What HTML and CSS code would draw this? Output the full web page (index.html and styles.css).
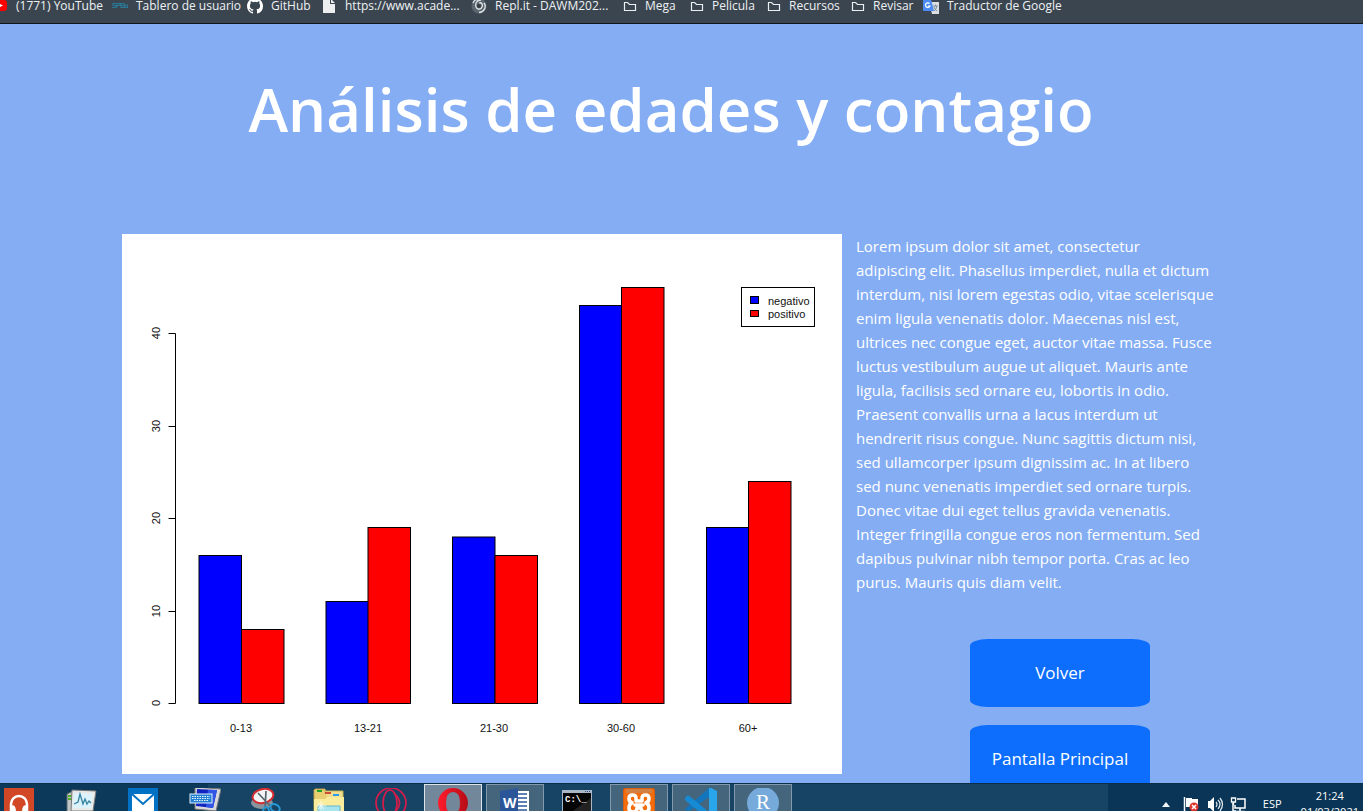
FILE: index.html
```html
<!DOCTYPE html>
<html lang="es">
<head>
<meta charset="utf-8">
<title>Análisis de edades y contagio</title>
<link rel="stylesheet" href="styles.css">
</head>
<body>
<nav class="bookmarks" aria-label="Marcadores">
  <a class="bookmark" href="#"><svg class="bm-icon" viewBox="0 0 16 16"><rect y="2" width="15" height="11" rx="3" fill="#f00"/><path d="M6 5l5 2.500-5 2.500z" fill="#fff"/></svg><span>(1771) YouTube</span></a>
  <a class="bookmark" href="#"><svg class="bm-icon" viewBox="0 0 16 16"><path d="M4 5.500H1v2h3v2H0M5 9.500v-4h3v2H5m4 2v-4h3v4zm4 0v-2.500h2.500v2.500zM5 7.500h6" fill="none" stroke="#2b7692" stroke-width="1.200"/></svg><span>Tablero de usuario</span></a>
  <a class="bookmark" href="#"><svg class="bm-icon" viewBox="0 0 16 16"><path fill="#fff" d="M8 0C3.580 0 0 3.580 0 8c0 3.540 2.290 6.530 5.470 7.590.4.070.55-.17.55-.38 0-.19-.01-.82-.01-1.490-2.010.37-2.530-.49-2.690-.94-.09-.23-.48-.94-.82-1.130-.28-.15-.68-.52-.01-.53.63-.01 1.080.58 1.230.82.72 1.210 1.870.87 2.330.66.07-.52.28-.87.51-1.070-1.780-.2-3.640-.89-3.640-3.950 0-.87.31-1.590.82-2.150-.08-.2-.36-1.020.08-2.120 0 0 .67-.21 2.200.82a7.600 7.600 0 0 1 4 0c1.530-1.040 2.200-.82 2.200-.82.44 1.100.16 1.920.08 2.120.51.56.82 1.270.82 2.150 0 3.070-1.870 3.750-3.650 3.950.29.25.54.73.54 1.480 0 1.070-.01 1.930-.01 2.200 0 .21.15.46.55.38A8 8 0 0 0 16 8c0-4.420-3.580-8-8-8z"/></svg><span>GitHub</span></a>
  <a class="bookmark" href="#"><svg class="bm-icon" viewBox="0 0 16 16"><path d="M2 0h7v6h5v9H2zM10 1l4 4h-4z" fill="#eceeef"/></svg><span>https://www.acade...</span></a>
  <a class="bookmark" href="#"><svg class="bm-icon" viewBox="0 0 16 16" fill="none"><circle cx="8" cy="8" r="7.500" fill="#5b6770"/><path d="M8 5c3-1 4 2 3 4-1 3-5 3-6 0-1-4 1-7 5-7M13 5c3 4 0 9-5 9.500M2 5c1-3 4-4 7-3.500" stroke="#dfe3e6" stroke-width="1.300"/><circle cx="8" cy="8" r="2" fill="#343b42"/></svg><span>Repl.it - DAWM202...</span></a>
  <a class="bookmark folder" href="#"><svg class="bm-icon" viewBox="0 0 16 16"><path d="M2.500 4.500h3l2 2h6v6h-11z" class="folder-line"/></svg><span>Mega</span></a>
  <a class="bookmark folder" href="#"><svg class="bm-icon" viewBox="0 0 16 16"><path d="M2.500 4.500h3l2 2h6v6h-11z" class="folder-line"/></svg><span>Pelicula</span></a>
  <a class="bookmark folder" href="#"><svg class="bm-icon" viewBox="0 0 16 16"><path d="M2.500 4.500h3l2 2h6v6h-11z" class="folder-line"/></svg><span>Recursos</span></a>
  <a class="bookmark folder" href="#"><svg class="bm-icon" viewBox="0 0 16 16"><path d="M2.500 4.500h3l2 2h6v6h-11z" class="folder-line"/></svg><span>Revisar</span></a>
  <a class="bookmark" href="#"><svg class="bm-icon" viewBox="0 0 16 16"><path d="M6 4h10v12H9z" fill="#dcdfe1"/><path d="M0 1h8l3 12H1q-1 0-1-1z" fill="#4c8bf5"/><path d="M6.500 5.500A2.300 2.300 0 1 0 7 8H5" fill="none" stroke="#fff" stroke-width="1.200"/><path d="M10 8h5M12.500 6.500V8m1.500 0q-1 4-3 5m0-4q1 3 3 4" fill="none" stroke="#78909c"/></svg><span>Traductor de Google</span></a>
</nav>

<main class="page">
  <h1 class="title">Análisis de edades y contagio</h1>
  <div class="content">
    <svg class="chart" viewBox="0 0 720 540" role="img" aria-label="Casos negativos y positivos por edad">
      <rect width="720" height="540" fill="#fff"/>
      <path class="axis" d="M46.500 99.500h7v370h-7M46.500 192.500h7M46.500 284.500h7M46.500 377.500h7"/>
      <g class="chart-text" text-anchor="middle">
        <text transform="translate(38 469) rotate(-90)">0</text>
        <text transform="translate(38 377) rotate(-90)">10</text>
        <text transform="translate(38 284) rotate(-90)">20</text>
        <text transform="translate(38 192) rotate(-90)">30</text>
        <text transform="translate(38 99) rotate(-90)">40</text>
        <text x="119" y="498">0-13</text>
        <text x="246" y="498">13-21</text>
        <text x="372" y="498">21-30</text>
        <text x="499" y="498">30-60</text>
        <text x="626" y="498">60+</text>
      </g>
      <g class="negative">
        <rect x="77" y="321.500" width="42.500" height="148"/>
        <rect x="204" y="367.500" width="42.500" height="102"/>
        <rect x="330.500" y="303" width="42.500" height="166.500"/>
        <rect x="457.500" y="71.500" width="42.500" height="398"/>
        <rect x="584.500" y="293.500" width="42.500" height="176"/>
      </g>
      <g class="positive">
        <rect x="119.500" y="395.500" width="42.500" height="74"/>
        <rect x="246" y="293.500" width="42.500" height="176"/>
        <rect x="373" y="321.500" width="42.500" height="148"/>
        <rect x="499.500" y="53.500" width="42.500" height="416"/>
        <rect x="626.500" y="247.500" width="42.500" height="222"/>
      </g>
      <rect class="axis" x="619.500" y="53.500" width="73" height="39"/>
      <rect class="negative" x="628.500" y="62.500" width="8" height="7"/>
      <rect class="positive" x="628.500" y="76.500" width="8" height="6"/>
      <g class="chart-text"><text x="646" y="71">negativo</text><text x="646" y="84">positivo</text></g>
    </svg>
    <section class="side">
      <p class="description">Lorem ipsum dolor sit amet, consectetur<br>
        adipiscing elit. Phasellus imperdiet, nulla et dictum<br>
        interdum, nisi lorem egestas odio, vitae scelerisque<br>
        enim ligula venenatis dolor. Maecenas nisl est,<br>
        ultrices nec congue eget, auctor vitae massa. Fusce<br>
        luctus vestibulum augue ut aliquet. Mauris ante<br>
        ligula, facilisis sed ornare eu, lobortis in odio.<br>
        Praesent convallis urna a lacus interdum ut<br>
        hendrerit risus congue. Nunc sagittis dictum nisi,<br>
        sed ullamcorper ipsum dignissim ac. In at libero<br>
        sed nunc venenatis imperdiet sed ornare turpis.<br>
        Donec vitae dui eget tellus gravida venenatis.<br>
        Integer fringilla congue eros non fermentum. Sed<br>
        dapibus pulvinar nibh tempor porta. Cras ac leo<br>
        purus. Mauris quis diam velit.</p>
      <div class="actions">
        <button class="action" type="button">Volver</button>
        <button class="action" type="button">Pantalla Principal</button>
      </div>
    </section>
  </div>
</main>

<footer class="taskbar">
  <div class="apps">
    <button class="app" aria-label="Música"><svg class="app-icon" viewBox="0 0 32 32"><path fill="#d24726" d="M1 0h30v32H1z"/><path d="M8 24v-8a8 8 0 0 1 16 0v8" fill="none" stroke="#fff" stroke-width="2.500"/><path d="M8 17q5-1 5 7H8zm16 0q-5-1-5 7h5z" fill="#fff"/></svg></button>
    <button class="app" aria-label="Monitor"><svg class="app-icon" viewBox="0 0 32 32"><path d="M2 6l6-3v23H2z" fill="#bfc7c9" stroke="#5b6569"/><path d="M3 8h4M3 11h4" stroke="#4aaf22" stroke-width="2"/><path d="M7 2l24 1-3 20H6z" fill="#e8eaea" stroke="#777"/><path d="M9 5l19 1-2 14H8z" fill="#dcf3fb"/><path d="M9 16l4-2 2-8 3 10 2-5 2 5 2-3 2 2" fill="none" stroke="#3483a1" stroke-width="1.300"/></svg></button>
    <button class="app" aria-label="Correo"><svg class="app-icon" viewBox="0 0 32 32"><path fill="#0072c6" d="M1 0h30v32H1z"/><path fill="#fff" d="M5 6h22v20H5z"/><path d="M5 6l11 10L27 6" fill="none" stroke="#0072c6" stroke-width="2"/></svg></button>
    <button class="app" aria-label="Teclado"><svg class="app-icon" viewBox="0 0 32 32"><path d="M6-1l26 2-5 22-21-2z" fill="#d7d9db" stroke="#777"/><path d="M8 1l20 1-4 18-17-2z" fill="#1224bf"/><path d="M19 2l9 0-4 18-7-1z" fill="#3155e6"/><rect x="1" y="6" width="22" height="9" fill="#2480d3" stroke="#dff2ff"/><path d="M3 8.500h18M3 10.500h18M5 12.500h14" stroke="#e7f8ff" stroke-width="1.200" stroke-dasharray="1.500 1"/></svg></button>
    <button class="app" aria-label="Recortes"><svg class="app-icon" viewBox="0 0 32 32"><ellipse cx="11" cy="15" rx="11" ry="6" fill="#88959e"/><ellipse cx="12" cy="8" rx="10.500" ry="7" fill="#f2f4f6" stroke="#d52c30" stroke-width="2" transform="rotate(-12 12 8)"/><path d="M7 5l14 15M15 3l-1 19" stroke="#59656e" stroke-width="1.700"/><ellipse cx="24" cy="20" rx="5" ry="3.500" fill="none" stroke="#2298d6" stroke-width="2" transform="rotate(28 24 20)"/><ellipse cx="15" cy="24" rx="3" ry="5" fill="none" stroke="#2298d6" stroke-width="2"/></svg></button>
    <button class="app" aria-label="Explorador"><svg class="app-icon" viewBox="0 0 32 32"><path d="M2 1h10l1 4h16v27H1V2z" fill="#e7cf72" stroke="#b79e45"/><path d="M12 5V3h18v29" fill="#f1df91" stroke="#c9b156"/><path d="M1 11h11l2-2h17v23H1z" fill="#fbeb9d"/><path d="M4 3h5" stroke="#20a130" stroke-width="2"/><path d="M12 5h6" stroke="#d04c31" stroke-width="2"/><path d="M20 7h6" stroke="#2c9be9" stroke-width="2"/><path d="M5 18h22v14H5z" fill="#a8e4ee" stroke="#5fb9ce"/><path d="M8 13v9M4 18h9M5 15l6 6m0-6l-6 6" stroke="#fff" opacity=".8"/></svg></button>
    <button class="app" aria-label="Opera GX"><svg class="app-icon" viewBox="0 0 32 32" fill="none" stroke="#d91b4a" stroke-width="1.700"><circle cx="16" cy="15" r="15"/><ellipse cx="15" cy="15" rx="7" ry="13"/><path d="M20 6q9 9 0 18"/></svg></button>
    <button class="app open active" aria-label="Opera"><svg class="app-icon" viewBox="0 0 32 32"><defs><linearGradient id="op"><stop stop-color="#ff1c2d"/><stop offset="1" stop-color="#b40c16"/></linearGradient></defs><path d="M16 0a15 15 0 1 0 0 30 15 15 0 0 0 0-30zm0 4q7 0 7 11t-7 11-7-11 7-11z" fill="url(#op)" fill-rule="evenodd"/></svg></button>
    <button class="app open" aria-label="Word"><svg class="app-icon" viewBox="0 0 32 32"><path d="M18 3h12v26H18z" fill="#fff"/><path d="M19 6h9M19 10h9M19 14h9M19 18h9M19 22h9" stroke="#2b579a" stroke-width="1.700"/><path d="M1 3l18-3v32L1 29z" fill="#2b579a"/><text x="4" y="20" class="word-letter">W</text></svg></button>
    <button class="app" aria-label="Símbolo del sistema"><svg class="app-icon" viewBox="0 0 32 32"><path d="M1 2h30v28H1z" fill="#aab7c6"/><path d="M2 5h28v25H2z" fill="#050505"/><path d="M2 30l28-20v20z" fill="#222"/><path d="M24 3.500h5" stroke="#284a93" stroke-dasharray="1 1"/><text x="4" y="14" class="cmd-text">C:\_</text></svg></button>
    <button class="app open" aria-label="XAMPP"><svg class="app-icon" viewBox="0 0 32 32"><rect width="32" height="32" rx="3" fill="#f36b0a" stroke="#b95417"/><path d="M3 1h26v4H3z" fill="#c08d69" opacity=".6"/><g fill="none" stroke="#fff" stroke-width="3.500" stroke-linejoin="round" stroke-linecap="round"><path d="M13 13V10q0-3-3.500-3T6 10.500t3 4M19 13v-3q0-3 3.500-3t3.500 3.500-3 4M13 13h6M9 15q-3 1-3 5t4 4 4-4h4q0 4 4 4t4-4-3-5M12 17h8"/></g></svg></button>
    <button class="app open" aria-label="Visual Studio Code"><svg class="app-icon" viewBox="0 0 32 32"><path d="M24 0L0 21l3 3 21-15z" fill="#1376bc"/><path d="M0 10l3-3 21 17v8L0 12z" fill="#168bd3"/><path d="M24-1l8 4v25l-8 4z" fill="#29a5eb"/></svg></button>
    <button class="app open" aria-label="R"><svg class="app-icon" viewBox="0 0 32 32"><circle cx="16" cy="15" r="16" fill="#75aadb"/><text x="16" y="21" text-anchor="middle" class="r-letter">R</text></svg></button>
  </div>
  <div class="tray">
    <svg class="tray-icons" viewBox="0 0 84 20">
      <path d="M0 11l4-5 4 5z" fill="#f2f6f8"/>
      <path d="M22.500 1v18" stroke="#fff" stroke-width="1.500"/><path d="M24 2h6v1h6v8H24z" fill="#fff"/><circle cx="32" cy="11" r="4.500" fill="#d9352b"/><path d="M30 9l4 4m0-4l-4 4" stroke="#fff" stroke-width="1.500"/>
      <path d="M46 5h2l4-4v15l-4-4h-2z" fill="#fff"/><path d="M54 6q2 2 0 5M56 4q4 4 0 9M58 2q5 6 0 13" fill="none" stroke="#e3ebef" stroke-width="1.200"/>
      <path d="M75 3h8v9H73V9M78 12v3M74 15.500h9M71 7v8h3" fill="none" stroke="#fff" stroke-width="1.500"/><path d="M69.500 2v4h4V2zM71.500 6v3" fill="none" stroke="#fff" stroke-width="1.300"/>
    </svg>
    <span class="language">ESP</span>
    <time class="clock"><span>21:24</span><span>01/03/2021</span></time>
  </div>
</footer>
</body>
</html>
```
FILE: styles.css
```css
* { box-sizing: border-box; }

body {
  margin: 0;
  height: 100vh;
  display: flex;
  flex-direction: column;
  overflow: hidden;
  background: #84adf4;
  color: #fff;
  font-family: "Open Sans", "Noto Sans", sans-serif;
}

.bookmarks {
  flex: none;
  display: grid;
  grid-template-columns: 120px 135px 74px 150px 151px 67px 77px 84px 73px auto;
  height: 24px;
  margin-left: -8px;
  background: #3a4550;
  border-bottom: 1px solid #11161b;
  overflow: hidden;
}

.bookmark {
  display: flex;
  gap: 8px;
  height: 16px;
  margin-top: -2px;
  align-items: center;
  color: #eef1f3;
  font-size: 12px;
  line-height: 16px;
  text-decoration: none;
  white-space: nowrap;
}

.bookmark.folder { gap: 7px; }
.bm-icon { width: 16px; height: 16px; flex: none; }
.folder-line { fill: none; stroke: #eceff1; stroke-width: 1.2; }

.page {
  flex: 1;
  min-height: 0;
  padding: 46px 21px 0 0;
  overflow: hidden;
}

.title {
  margin: 0 0 86px;
  font-size: 60px;
  font-weight: 600;
  line-height: 78px;
  text-align: center;
}

.content {
  display: grid;
  grid-template-columns: 720fr 364fr;
  gap: 14px;
  max-width: 1098px;
  margin: 0 auto;
}

.chart { display: block; width: 100%; }
.axis { fill: none; stroke: #000; }
.negative { fill: #00f; stroke: #000; }
.positive { fill: #f00; stroke: #000; }
.chart-text { fill: #111; font: 11px "Liberation Sans", Arial, sans-serif; }

.side { min-width: 0; }

.description {
  margin: 0;
  font-size: 15px;
  line-height: 24px;
  white-space: nowrap;
}

.actions {
  display: flex;
  flex-direction: column;
  align-items: center;
  gap: 18px;
  padding: 45px 0 0 44px;
}

.action {
  width: 180px;
  height: 68px;
  padding: 0 0 2px;
  border: 0;
  border-radius: 18px / 7px;
  background: #0d6efd;
  color: #fff;
  font: 17px "Open Sans", "Noto Sans", sans-serif;
}

.taskbar {
  flex: none;
  display: flex;
  justify-content: space-between;
  height: 28px;
  overflow: hidden;
  background: linear-gradient(90deg, #0c3859 208px, #174464 208px, #174464 calc(100% - 255px), #0a3556 calc(100% - 255px));
  border-top: 1px solid #0b2e49;
}

.apps {
  display: flex;
  gap: 4px;
  margin-left: -10px;
}

.app {
  display: flex;
  justify-content: center;
  width: 58px;
  height: 40px;
  padding: 4px 0 0;
  border: 0;
  background: none;
}

.app.open {
  padding-top: 3px;
  border: 1px solid #8199ac;
  background: #45657d;
}

.app.active {
  border-color: #dce4e9;
  background: #72879a;
}

.app-icon { width: 32px; height: 32px; flex: none; }
.word-letter { fill: #fff; font: bold 14px "Open Sans", sans-serif; }
.cmd-text { fill: #fff; font: bold 9px "Liberation Mono", monospace; }
.r-letter { fill: #fff; font: 21px "Liberation Serif", serif; }

.tray {
  display: flex;
  align-items: flex-start;
  padding-right: 4px;
  font-size: 12px;
  line-height: 16px;
}

.tray-icons { width: 84px; height: 20px; margin-top: 12px; }
.language { margin: 12px 19px 0 17px; font-size: 11px; }

.clock {
  display: flex;
  flex-direction: column;
  align-items: center;
  padding-top: 4px;
  font-size: 11px;
}
```
